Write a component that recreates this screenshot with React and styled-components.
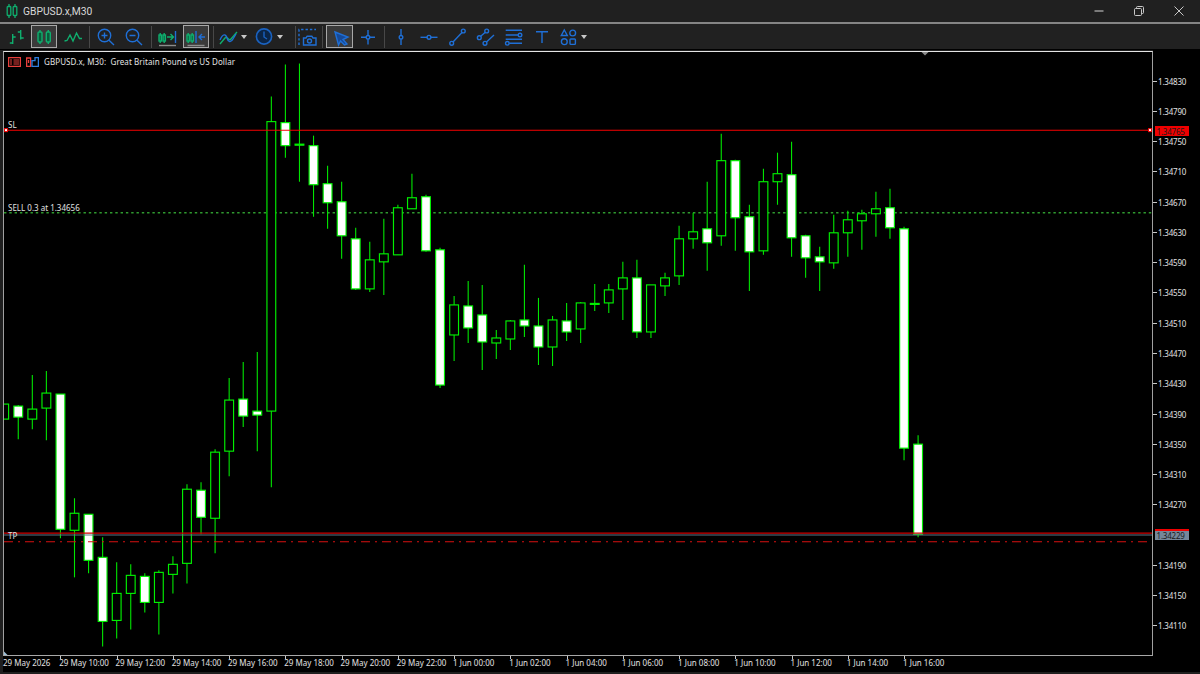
import React from "react";
import styled, { createGlobalStyle } from "styled-components";

const GREEN = "#0fae6e";
const BLUE = "#1f6fd6";
const LIME = "#00e600";
const SMALL_FONT = `"Noto Sans", "DejaVu Sans", sans-serif`;

const GlobalStyle = createGlobalStyle`
  html, body { margin: 0; padding: 0; background: #000; overflow: hidden; }
`;

const Window = styled.div`
  width: 1200px;
  height: 674px;
  display: flex;
  flex-direction: column;
  background: #1f1f1f;
  overflow: hidden;
`;

const TitleBar = styled.header`
  height: 22px;
  flex: none;
  display: flex;
  align-items: center;
  padding: 0 1px 0 0;
  background: #202020;
  color: #d8d8d8;
`;
const AppIcon = styled.svg`
  width: 14px;
  height: 14px;
  margin-left: 5px;
`;
const TitleText = styled.span`
  flex: 1;
  margin-left: 4px;
  font: 10.3px Roboto, "Open Sans", sans-serif;
`;
const WinButton = styled.div`
  width: 40px;
  height: 22px;
  display: flex;
  align-items: center;
  justify-content: center;
`;
const Divider = styled.div`
  height: 2px;
  flex: none;
  background: #858585;
`;

const Toolbar = styled.nav`
  height: 25px;
  flex: none;
  display: flex;
  align-items: center;
  padding-left: 2px;
  background: #212121;
  border-bottom: 1px solid #000;
`;
const ToolButton = styled.div`
  width: ${(p) => p.$w - 2}px;
  height: 23px;
  margin: 0 1px;
  flex: none;
  box-sizing: border-box;
  display: flex;
  align-items: center;
  justify-content: center;
  border: 1px solid ${(p) => (p.$active ? "#a8a8a8" : "transparent")};
  background: ${(p) => (p.$active ? "#3a3a3a" : "transparent")};
`;
const DropButton = styled.div`
  width: 36px;
  height: 23px;
  flex: none;
  display: flex;
  align-items: center;
`;
const Caret = styled.span`
  margin-left: 1px;
  border-left: 3.5px solid transparent;
  border-right: 3.5px solid transparent;
  border-top: 4px solid #c8c8c8;
`;
const Sep = styled.span`
  width: 1px;
  height: 22px;
  flex: none;
  margin: 0 ${(p) => p.$r}px 0 ${(p) => p.$l}px;
  background: #484848;
`;
const Ico = styled.svg`
  width: 24px;
  height: 24px;
  flex: none;
  fill: none;
  stroke: ${(p) => p.$c || BLUE};
  stroke-width: 1.4;
`;

const Workspace = styled.main`
  flex: none;
  display: grid;
  grid-template-columns: 1150px 47px;
  grid-template-rows: 606px 16px;
  padding-left: 3px;
`;
const Plot = styled.section`
  position: relative;
  box-sizing: border-box;
  border-top: 1.5px solid #e4e4e4;
  border-left: 1px solid #a0a0a0;
  border-right: 1.5px solid #a0a0a0;
  border-bottom: 1.5px solid #a8a8a8;
  overflow: hidden;
  background: #000;
  margin-top: 1px;
`;
const ChartSvg = styled.svg`
  display: block;
  width: 100%;
  height: 100%;
`;
const ChartHeader = styled.div`
  position: absolute;
  left: 4px;
  top: 4px;
  display: flex;
  align-items: center;
  gap: 5px;
  color: #e4e4e4;
  font: 8px ${SMALL_FONT};
  letter-spacing: 0.1px;
  white-space: pre;
`;
const HeadIcon = styled.svg`
  width: 13px;
  height: 10px;
  flex: none;
`;
const ObjectLabel = styled.span`
  position: absolute;
  left: 4px;
  top: ${(p) => p.$top}px;
  color: #e0e0e0;
  font: 8px ${SMALL_FONT};
  line-height: 10px;
  white-space: pre;
`;

const PriceAxis = styled.aside`
  position: relative;
  padding-top: 16px;
  background: #000;
`;
const PriceRow = styled.div`
  height: 30.28px;
  display: flex;
  align-items: center;
  color: #e2e2e2;
  font: 8px ${SMALL_FONT};
  letter-spacing: -0.2px;
`;
const PriceTick = styled.i`
  width: 4px;
  height: 1px;
  margin-right: 1px;
  background: #c8c8c8;
`;
const PriceTag = styled.span`
  position: absolute;
  left: 2px;
  top: ${(p) => p.$top}px;
  width: 34px;
  height: ${(p) => p.$h}px;
  box-sizing: border-box;
  display: flex;
  align-items: center;
  padding-left: 1.5px;
  background: ${(p) => p.$bg};
  border-top: ${(p) => (p.$line ? "2px solid #f00000" : "none")};
  color: #1a1a1a;
  font: 8px ${SMALL_FONT};
  letter-spacing: -0.2px;
`;

const TimeAxis = styled.footer`
  grid-column: 1 / 3;
  display: flex;
  background: #000;
`;
const TimeCell = styled.div`
  position: relative;
  width: ${(p) => p.$w}px;
  flex: none;
  padding-top: 2px;
  color: #e2e2e2;
  font: 8px/10px ${SMALL_FONT};
  white-space: pre;
  &::before {
    content: "";
    display: ${(p) => (p.$tick ? "block" : "none")};
    position: absolute;
    left: 1px;
    top: 0;
    width: 1px;
    height: 3px;
    background: #c8c8c8;
  }
`;

// [wick top, wick bottom, body top, body bottom, filled]
const candles = [
  [404, 419, 404, 419, 0], [405, 439, 406, 417, 1], [375, 429, 409, 419, 0], [371, 440, 393, 408, 0],
  [394, 538, 394, 529, 1], [498, 577, 513, 530, 0], [514, 573, 514, 560, 1], [537, 646, 557, 621, 1],
  [562, 638, 593, 620, 0], [564, 629, 575, 593, 0], [573, 612, 576, 602, 1], [570, 634, 572, 602, 0],
  [556, 593, 564, 574, 0], [484, 583, 489, 563, 0], [482, 534, 490, 517, 1], [449, 553, 452, 518, 0],
  [378, 476, 400, 451, 0], [362, 427, 399, 416, 1], [352, 451, 411, 415, 1], [97, 487, 122, 411, 0],
  [65, 158, 123, 146, 1], [64, 182, 144.5, 145.5, 1], [136, 217, 146, 185, 1], [166, 229, 184, 203, 1],
  [182, 259, 202, 236, 1], [228, 290, 239, 289, 1], [242, 292, 260, 289, 0], [219, 295, 254, 262, 0],
  [205, 255, 208, 255, 0], [174, 209, 198, 209, 0], [195, 252, 197, 251, 1], [248, 388, 250, 385, 1],
  [296, 361, 305, 335, 0], [281, 343, 306, 328, 1], [285, 370, 315, 342, 1], [330, 359, 338, 343, 0],
  [320, 350, 321, 339, 0], [265, 337, 320, 326, 1], [298, 365, 326, 347, 1], [316, 366, 320, 347, 0],
  [303, 341, 321, 332, 1], [302, 343, 303, 329, 0], [284, 311, 303.5, 304.5, 1], [284, 313, 290, 303, 0],
  [262, 320, 278, 289, 0], [260, 338, 278, 332, 1], [285, 338, 285, 332, 0], [273, 296, 278, 286, 0],
  [226, 285, 239, 276, 0], [213, 249, 232, 239, 0], [182, 271, 229, 243, 1], [134, 246, 161, 236, 0],
  [160, 251, 161, 218, 1], [205, 291, 217, 252, 1], [169, 255, 182, 251, 0], [153, 205, 174, 182, 0],
  [142, 257, 175, 238, 1], [235, 278, 236, 258, 1], [247, 291, 257, 262, 1], [215, 269, 233, 263, 0],
  [211, 257, 220, 233, 0], [210, 250, 214, 221, 0], [192, 237, 209, 214, 0], [189, 239, 208, 228, 1],
  [227, 460, 229, 448, 1], [435, 537, 444, 534, 1],
];

const prices = [
  "1.34830", "1.34790", "1.34750", "1.34710", "1.34670", "1.34630", "1.34590", "1.34550", "1.34510",
  "1.34470", "1.34430", "1.34390", "1.34350", "1.34310", "1.34270", "", "1.34190", "1.34150", "1.34110",
];

const times = [
  "29 May 10:00", "29 May 12:00", "29 May 14:00", "29 May 16:00", "29 May 18:00", "29 May 20:00", "29 May 22:00",
  "1 Jun 00:00", "1 Jun 02:00", "1 Jun 04:00", "1 Jun 06:00", "1 Jun 08:00", "1 Jun 10:00", "1 Jun 12:00",
  "1 Jun 14:00", "1 Jun 16:00",
];

const Candle = ({ i, c }) => {
  const x = 4.2 + 14.06 * i;
  const [wt, wb, bt, bb, filled] = c;
  return (
    <g>
      <line x1={x} x2={x} y1={wt} y2={wb} stroke={LIME} strokeWidth="1.1" />
      <rect x={x - 4.4} y={bt} width="8.8" height={bb - bt} fill={filled ? "#fff" : "#000"} stroke="#00f000" strokeWidth="1.15" />
    </g>
  );
};

const Chart = () => (
  <ChartSvg viewBox="4 52.5 1148 602" preserveAspectRatio="none">
    <line x1="4" x2="1152" y1="213" y2="213" stroke="#2f9a2f" strokeWidth="1.3" strokeDasharray="2.4 2.9" />
    {candles.map((c, i) => (
      <Candle key={i} i={i} c={c} />
    ))}
    <line x1="4" x2="1152" y1="130.5" y2="130.5" stroke="#f80000" strokeWidth="1" />
    <line x1="4" x2="1152" y1="532.8" y2="532.8" stroke="#d00000" strokeWidth="1.3" />
    <line x1="4" x2="1152" y1="534.8" y2="534.8" stroke="#5f7686" strokeWidth="1" />
    <line x1="4" x2="1152" y1="541.5" y2="541.5" stroke="#d81010" strokeWidth="1.1" strokeDasharray="9 5 2 5" />
    <rect x="4.5" y="129" width="3" height="3" fill="#fff" stroke="#f00000" />
    <rect x="1148.5" y="129" width="3" height="3" fill="#fff" stroke="#f00000" />
    <path d="M921 52 h8 l-4 4 z" fill="#8a8a8a" />
    <path d="M4 651 l4 4 h-4 z" fill="#9cc0d8" />
  </ChartSvg>
);

const MiniCandle = ({ x, y = 10, h = 6, w = 2.4 }) => (
  <>
    <path d={`M${x} ${y - 2}V${y + h + 2}`} />
    <rect x={x - w / 2} y={y} width={w} height={h} fill="#0a5c3c" />
  </>
);

const icons = {
  bars: (
    <Ico viewBox="0 0 24 24" $c={GREEN}>
      <path d="M8.7 9v10M5.8 18h3M8.7 12h3M16.7 5v9.5M13.8 7h3M16.7 13h3" />
    </Ico>
  ),
  candles: (
    <Ico viewBox="0 0 24 24" $c={GREEN}>
      <path d="M8 5v2M8 17v2M16.3 5v2M16.3 17v2" />
      <rect x="6" y="7" width="4" height="10" rx="1" fill="#0a5c3c" />
      <rect x="14.3" y="7" width="4" height="10" rx="1" fill="#0a5c3c" />
    </Ico>
  ),
  line: (
    <Ico viewBox="0 0 24 24" $c={GREEN}>
      <path d="M3.5 16l2.5-.5L9 10l3 6 3.5-8 3 5.5h2.5" />
    </Ico>
  ),
  zoomIn: (
    <Ico viewBox="0 0 24 24">
      <circle cx="11.5" cy="10.5" r="6.2" />
      <path d="M16 15.2l5 4.8M8.5 10.5h6M11.5 7.5v6" />
    </Ico>
  ),
  zoomOut: (
    <Ico viewBox="0 0 24 24">
      <circle cx="11.5" cy="10.5" r="6.2" />
      <path d="M16 15.2l5 4.8M8.5 10.5h6" />
    </Ico>
  ),
  autoScroll: (
    <Ico viewBox="0 0 24 24" $c={GREEN}>
      <MiniCandle x={4.2} />
      <MiniCandle x={8.2} />
      <path d="M11 12h6M14.5 9l3 3-3 3" />
      <path d="M19.5 6v12" stroke={BLUE} />
      <path d="M3 20.5h17" stroke="#8c8c8c" />
    </Ico>
  ),
  shift: (
    <Ico viewBox="0 0 24 24" $c={GREEN}>
      <MiniCandle x={4.2} />
      <MiniCandle x={8.2} />
      <path d="M12 6v12" stroke={BLUE} />
      <path d="M15 12h6M18 9l-3 3 3 3" stroke={BLUE} />
      <path d="M3.5 20.5h17" stroke="#8c8c8c" />
    </Ico>
  ),
  indicators: (
    <Ico viewBox="0 0 24 24">
      <path d="M4 19l5-6c2-3 4 4 6 1l6-7" stroke={GREEN} />
      <path d="M4 15c3-7 6-6 7-2s4 5 6 1l3-5" />
    </Ico>
  ),
  clock: (
    <Ico viewBox="0 0 24 24" $c="#1a62c0">
      <circle cx="12" cy="11.5" r="7.6" fill="#0b2547" strokeWidth="1.6" />
      <path d="M12 6.5v5.5l3 2" />
    </Ico>
  ),
  camera: (
    <Ico viewBox="0 0 24 24">
      <path d="M2 20V4.5h17" strokeDasharray="2.4 2" />
      <path d="M6.5 20v-7h2.5l1.2-1.8h4.6l1.2 1.8h3v7z" />
      <circle cx="12.5" cy="16" r="2" />
    </Ico>
  ),
  cursor: (
    <Ico viewBox="0 0 24 24">
      <path d="M7 7l13 5-5 2.5 4 4.5-2.5 1-4-4-2 4z" fill="#164a99" />
    </Ico>
  ),
  cross: (
    <Ico viewBox="0 0 24 24">
      <path d="M5 12.3h14M12 5v14.5" />
      <circle cx="12" cy="12.3" r="1.8" fill="#212121" />
    </Ico>
  ),
  vline: (
    <Ico viewBox="0 0 24 24">
      <path d="M12 4v16" />
      <circle cx="12" cy="12.3" r="1.8" fill="#212121" />
    </Ico>
  ),
  hline: (
    <Ico viewBox="0 0 24 24">
      <path d="M3.5 12.3h17" />
      <circle cx="12" cy="12.3" r="1.9" fill="#212121" />
    </Ico>
  ),
  trend: (
    <Ico viewBox="0 0 24 24">
      <path d="M7 17L16 7.5" />
      <circle cx="5.7" cy="18.3" r="1.9" />
      <circle cx="17.3" cy="6" r="1.9" />
    </Ico>
  ),
  channel: (
    <Ico viewBox="0 0 24 24">
      <path d="M6.7 11.3l4.6-4M12.5 17l7.5-7" />
      <circle cx="5.3" cy="12.7" r="1.9" />
      <circle cx="12.7" cy="6" r="1.9" />
      <circle cx="11" cy="18.3" r="1.9" />
    </Ico>
  ),
  fibo: (
    <Ico viewBox="0 0 24 24">
      <path d="M3.7 5.3H20M3.7 10h12.5M3.7 14.3H20M7.2 18.3H20" />
      <circle cx="18" cy="10" r="1.8" />
      <circle cx="5.3" cy="18.3" r="1.8" />
    </Ico>
  ),
  text: (
    <Ico viewBox="0 0 24 24">
      <path d="M6 6.7h12M12 6.7V18" />
    </Ico>
  ),
  shapes: (
    <Ico viewBox="0 0 24 24">
      <path d="M8.3 5l3 5.5h-6z" />
      <circle cx="16.7" cy="8" r="2.9" />
      <circle cx="8.3" cy="16.7" r="2.9" />
      <rect x="14" y="14" width="5.4" height="5.4" rx="0.8" />
    </Ico>
  ),
};

const App = () => (
  <Window>
    <GlobalStyle />
    <TitleBar>
      <AppIcon viewBox="0 0 14 14" fill="none" stroke={GREEN} strokeWidth="1.3">
        <path d="M4 0v2.5M4 11.5V14M10 0v2.5M10 11.5V14" />
        <rect x="2.2" y="2.5" width="3.6" height="9" rx="0.8" />
        <rect x="8.2" y="2.5" width="3.6" height="9" rx="0.8" />
      </AppIcon>
      <TitleText>GBPUSD.x,M30</TitleText>
      <WinButton>
        <svg width="10" height="10" viewBox="0 0 10 10" stroke="#b8b8b8" strokeWidth="1.2">
          <path d="M0.5 5h9" />
        </svg>
      </WinButton>
      <WinButton>
        <svg width="10" height="10" viewBox="0 0 10 10" fill="none" stroke="#c8c8c8" strokeWidth="1">
          <rect x="0.5" y="2.5" width="7" height="7" rx="1" />
          <path d="M2.5 2.5V1.5a1 1 0 0 1 1-1h5a1 1 0 0 1 1 1v5a1 1 0 0 1-1 1h-1" />
        </svg>
      </WinButton>
      <WinButton>
        <svg width="10" height="10" viewBox="0 0 10 10" stroke="#c8c8c8" strokeWidth="1">
          <path d="M0.5 0.5l9 9M9.5 0.5l-9 9" />
        </svg>
      </WinButton>
    </TitleBar>
    <Divider />
    <Toolbar>
      <ToolButton $w={28}>{icons.bars}</ToolButton>
      <ToolButton $w={28} $active>{icons.candles}</ToolButton>
      <ToolButton $w={29}>{icons.line}</ToolButton>
      <Sep $l={1.5} $r={1.5} />
      <ToolButton $w={28}>{icons.zoomIn}</ToolButton>
      <ToolButton $w={28}>{icons.zoomOut}</ToolButton>
      <Sep $l={3.5} $r={3.5} />
      <ToolButton $w={26.5}>{icons.autoScroll}</ToolButton>
      <ToolButton $w={28} $active>{icons.shift}</ToolButton>
      <Sep $l={3} $r={2} />
      <DropButton>{icons.indicators}<Caret /></DropButton>
      <DropButton>{icons.clock}<Caret /></DropButton>
      <Sep $l={7} $r={1} />
      <ToolButton $w={24}>{icons.camera}</ToolButton>
      <Sep $l={1.5} $r={2} />
      <ToolButton $w={29} $active>{icons.cursor}</ToolButton>
      <ToolButton $w={28}>{icons.cross}</ToolButton>
      <Sep $l={1.5} $r={1.5} />
      <ToolButton $w={29}>{icons.vline}</ToolButton>
      <ToolButton $w={28}>{icons.hline}</ToolButton>
      <ToolButton $w={29}>{icons.trend}</ToolButton>
      <ToolButton $w={28}>{icons.channel}</ToolButton>
      <ToolButton $w={28}>{icons.fibo}</ToolButton>
      <ToolButton $w={28}>{icons.text}</ToolButton>
      <DropButton>{icons.shapes}<Caret /></DropButton>
    </Toolbar>
    <Workspace>
      <Plot>
        <Chart />
        <ChartHeader>
          <HeadIcon viewBox="0 0 13 10" fill="none" stroke="#e8403c" strokeWidth="1.3">
            <rect x="0.6" y="0.6" width="11.8" height="8.8" />
            <path d="M2 3h2M5.5 3H11M2 5h2M5.5 5H11M2 7h2M5.5 7H11" strokeWidth="1" />
          </HeadIcon>
          <HeadIcon viewBox="0 0 13 10" fill="none" stroke="#2f7fe0" strokeWidth="1.3">
            <path d="M0.6 1h4v8.4h-4z" stroke="#e8403c" />
            <path d="M6 9.4h6.4V0.6H9v3H6z" />
            <path d="M2.5 3v3" stroke="#e8403c" />
          </HeadIcon>
          <span>{"GBPUSD.x, M30:  Great Britain Pound vs US Dollar"}</span>
        </ChartHeader>
        <ObjectLabel $top={68}>SL</ObjectLabel>
        <ObjectLabel $top={151}>SELL 0.3 at 1.34656</ObjectLabel>
        <ObjectLabel $top={479}>TP</ObjectLabel>
      </Plot>
      <PriceAxis>
        {prices.map((p) => (
          <PriceRow key={p || "blank"}>
            {p && <PriceTick />}
            {p}
          </PriceRow>
        ))}
        <PriceTag $top={76} $h={10} $bg="#f00000">1.34765</PriceTag>
        <PriceTag $top={479} $h={11} $bg="#75879a" $line>1.34229</PriceTag>
      </PriceAxis>
      <TimeAxis>
        <TimeCell $w={56.3}>29 May 2026</TimeCell>
        {times.map((t) => (
          <TimeCell key={t} $w={56.25} $tick>{t}</TimeCell>
        ))}
      </TimeAxis>
    </Workspace>
  </Window>
);

export default App;
